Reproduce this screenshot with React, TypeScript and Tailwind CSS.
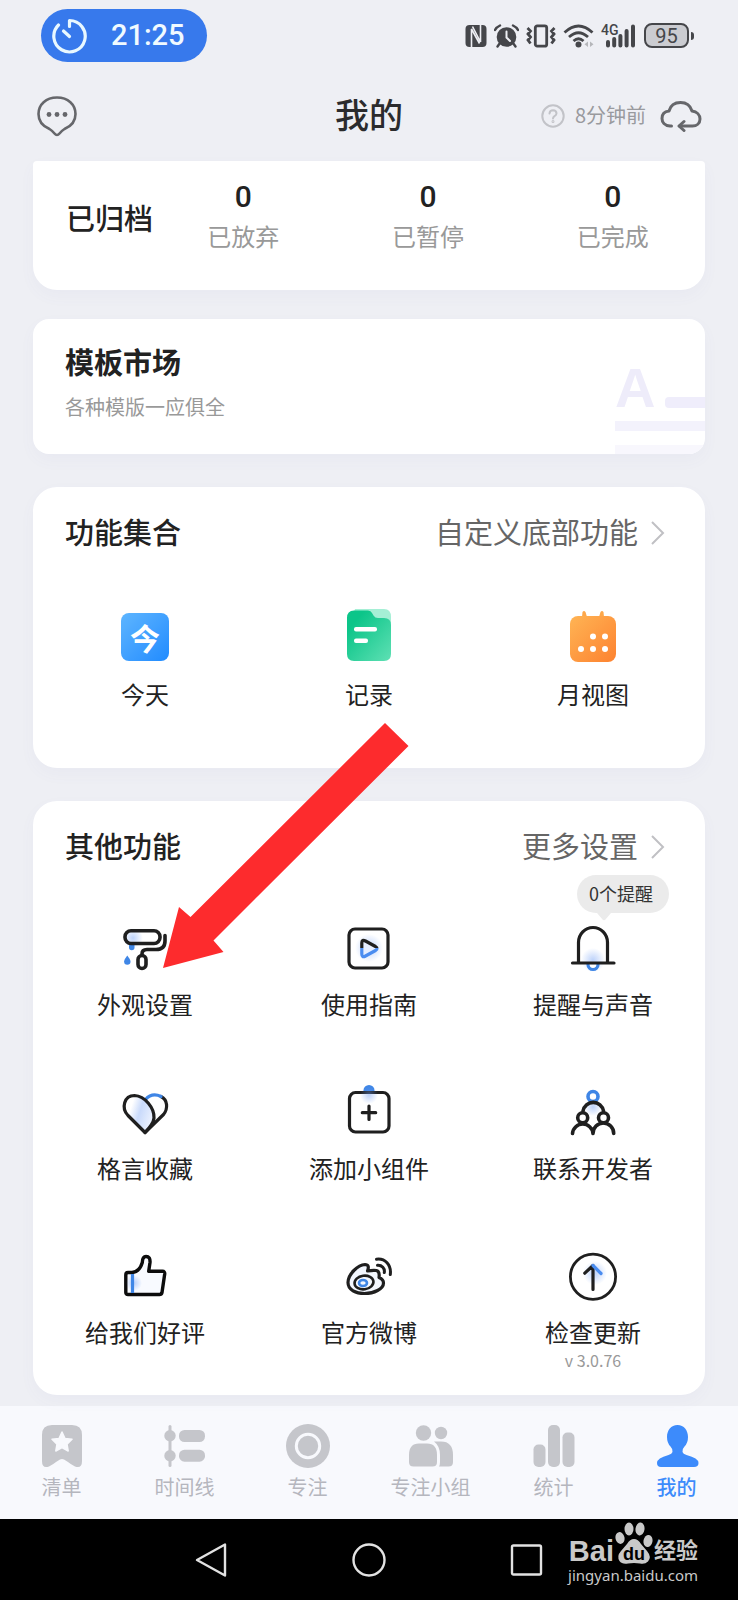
import React from 'react';

interface Feature {
  label: string;
  icon: React.ReactNode;
  note?: string;
  badge?: string;
}

const archived = [
  { label: '已放弃', count: 0 },
  { label: '已暂停', count: 0 },
  { label: '已完成', count: 0 },
];

const INK = '#1f1f1f';
const BLUE = '#3f86e6';

/* ---------- Status bar icons ---------- */

function StatusIcons() {
  return (
    <div className="flex items-center gap-[7px] text-[#45464a]">
      <svg width="22" height="24" viewBox="0 0 22 24" aria-label="NFC">
        <rect x="0.500" y="1" width="21" height="22" rx="4" fill="currentColor" />
        <path d="M6.500 23V5L14.500 19.500M15.500 1V18L7.500 2.500" stroke="#eeeff4" strokeWidth="1.600" fill="none" />
      </svg>
      <svg width="25" height="24" viewBox="0 0 25 24" aria-label="闹钟">
        <circle cx="12.500" cy="13" r="9.800" fill="currentColor" />
        <path d="M1 6Q2.500 3 6 1.500M24 6Q22.500 3 19 1.500M6 19L3.500 22.500M19 19L21.500 22.500" stroke="currentColor" strokeWidth="2.400" strokeLinecap="round" fill="none" />
        <path d="M12.500 7.500V13.500L16 17" stroke="#eeeff4" strokeWidth="2" fill="none" strokeLinecap="round" />
      </svg>
      <svg width="30" height="24" viewBox="0 0 30 24" aria-label="振动">
        <rect x="9.300" y="1.800" width="11.400" height="20.400" rx="2" fill="none" stroke="currentColor" strokeWidth="2.800" />
        <path d="M1.500 4L4.500 7L2 10L4.500 13L2 16L4.500 19.500M28.500 4L25.500 7L28 10L25.500 13L28 16L25.500 19.500" fill="none" stroke="currentColor" strokeWidth="2.800" />
      </svg>
      <svg width="31" height="24" viewBox="0 0 31 24" aria-label="无线网络">
        <path d="M1.500 8.500Q15.500 -4.500 29.500 8.500M6 13Q15.500 4.500 25 13M10.500 17Q15.500 12.500 20.500 17" fill="none" stroke="currentColor" strokeWidth="2.800" />
        <circle cx="15.500" cy="20.500" r="3" fill="currentColor" />
        <path d="M25 17.500V23L21.500 20.200ZM27 17.500V23L30.500 20.200Z" fill="#b5b6ba" />
      </svg>
      <div className="relative">
        <svg width="36" height="24" viewBox="0 0 36 24" aria-label="信号">
          <path d="M7 18V21.500M13.200 15V21.500M19.400 12V21.500M25.600 7V21.500M32 2.500V21.500" stroke="currentColor" strokeWidth="4" strokeLinecap="round" />
        </svg>
        <span className="absolute left-0 -top-[2px] font-[Roboto] text-sm leading-4 font-medium">4G</span>
      </div>
      <div className="flex items-center gap-[2px]">
        <div className="flex h-[25px] w-[45px] items-center justify-center rounded-lg border-2 border-current bg-[#cbccd1] font-[Roboto] text-xl leading-5">
          95
        </div>
        <div className="h-2 w-[3px] rounded-r-sm bg-current" />
      </div>
    </div>
  );
}

function TimerIcon() {
  return (
    <svg width="36" height="36" viewBox="0 0 36 36" fill="none" stroke="#e8f8ff" strokeWidth="3.200" strokeLinecap="round" strokeLinejoin="round">
      <path d="M18.500 8.500V2.500A15.700 15.700 0 1 1 7.500 7" />
      <path d="M12.500 13L18.500 18.500" />
    </svg>
  );
}

/* ---------- Colourful shortcuts ---------- */

function TodayIcon() {
  return (
    <div className="flex h-12 w-12 items-center justify-center rounded-lg bg-linear-to-br from-[#5db5ff] to-[#1f8bff] text-3xl leading-10 font-bold text-white">
      今
    </div>
  );
}

function RecordIcon() {
  return (
    <svg width="56" height="56" viewBox="0 0 56 56">
      <defs>
        <linearGradient id="record" x1="0" y1="0" x2="1" y2="1">
          <stop offset="0.2" stopColor="#0cc589" />
          <stop offset="1" stopColor="#5fe0b4" />
        </linearGradient>
      </defs>
      <path d="M14 0H43Q50 0 50 8V20H30L12 6Z" fill="#a5efd5" />
      <path d="M13 1.500H27Q30 1.500 31 4L32.500 6.500Q34 9 37 9H43Q50 9 50 16V45Q50 52 43 52H13Q6 52 6 45V9Q6 1.500 13 1.500Z" fill="url(#record)" />
      <rect x="13" y="18" width="23" height="4.500" rx="2" fill="#fff" />
      <rect x="13" y="29.500" width="14" height="4.500" rx="2" fill="#fff" />
    </svg>
  );
}

function MonthIcon() {
  return (
    <svg width="56" height="56" viewBox="0 0 56 56">
      <defs>
        <linearGradient id="month" x1="0" y1="0" x2="1" y2="1">
          <stop offset="0" stopColor="#ffb454" />
          <stop offset="1" stopColor="#fd8230" />
        </linearGradient>
      </defs>
      <path d="M17 8L17.500 3Q19 1 20.500 3L22 8ZM34 8L35.500 3Q37 1 38.500 3L39 8Z" fill="#fda84b" />
      <rect x="5" y="7" width="46" height="46" rx="8" fill="url(#month)" />
      <g fill="#fff">
        <circle cx="28" cy="27.500" r="3" />
        <circle cx="40" cy="27.500" r="3" />
        <circle cx="16" cy="40" r="3" />
        <circle cx="28" cy="40" r="3" />
        <circle cx="40" cy="40" r="3" />
      </g>
    </svg>
  );
}

/* ---------- Line icons, all on a 48px grid ---------- */

function LineIcon({ children, width = 3.2 }: { children: React.ReactNode; width?: number }) {
  return (
    <svg
      width="48"
      height="48"
      viewBox="0 0 48 48"
      fill="none"
      stroke={INK}
      strokeWidth={width}
      strokeLinecap="round"
      strokeLinejoin="round"
      className="overflow-visible"
    >
      {children}
    </svg>
  );
}

// Soft blue spot behind the strokes
function Glow({ id, cx, cy, r }: { id: string; cx: number; cy: number; r: number }) {
  return (
    <>
      <radialGradient id={id}>
        <stop offset="0" stopColor="#6d9cf5" stopOpacity="0.45" />
        <stop offset="1" stopColor="#6d9cf5" stopOpacity="0" />
      </radialGradient>
      <circle cx={cx} cy={cy} r={r} fill={`url(#${id})`} stroke="none" />
    </>
  );
}

const otherFeatures: Feature[] = [
  {
    label: '外观设置',
    icon: (
      <LineIcon width={3.6}>
        <Glow id="g-roller" cx={12} cy={13} r={10} />
        <path d="M8 20H13.500V22.500A2.700 2.700 0 0 1 8 22.500Z" fill={BLUE} stroke="none" />
        <rect x="4" y="5.800" width="35" height="12.700" rx="6" />
        <path d="M44 10.500V16Q44 24.500 35 24.500H26Q21 24.500 21 29" />
        <rect x="17" y="30.500" width="8" height="13" rx="4" />
        <path d="M6.300 30.500Q9.500 34.500 9.500 36.500A3.200 3.200 0 0 1 3.100 36.500Q3.100 34.500 6.300 30.500Z" fill={BLUE} stroke="none" />
      </LineIcon>
    ),
  },
  {
    label: '使用指南',
    icon: (
      <LineIcon>
        <defs>
          <linearGradient id="play" gradientUnits="userSpaceOnUse" x1="0" y1="14" x2="0" y2="33">
            <stop offset="0.480" stopColor={INK} />
            <stop offset="0.500" stopColor="#4b8df0" />
          </linearGradient>
        </defs>
        <Glow id="g-play" cx={24} cy={23} r={14} />
        <rect x="4" y="4" width="39" height="39" rx="6" />
        <path d="M16.800 18Q16.800 14 20.500 16L30.500 21.500Q33.500 23.300 30.500 25.500L20.500 31Q16.800 33 16.800 29Z" stroke="url(#play)" fill="#e6eeff" />
      </LineIcon>
    ),
  },
  {
    label: '提醒与声音',
    badge: '0个提醒',
    icon: (
      <LineIcon>
        <Glow id="g-bell" cx={24} cy={35} r={12} />
        <path d="M19 39.500A5 5 0 0 0 29 39.500" stroke={BLUE} fill="#fff" />
        <path d="M9.500 37V17.500A14.500 15 0 0 1 38.500 17.500V37" />
        <path d="M3.500 38H45" />
      </LineIcon>
    ),
  },
  {
    label: '格言收藏',
    icon: (
      <LineIcon>
        <defs>
          <linearGradient id="leaf" x1="0" y1="0.300" x2="1" y2="0.700">
            <stop offset="0.200" stopColor="#fff" />
            <stop offset="0.500" stopColor="#c9dafb" />
            <stop offset="1" stopColor="#f2f6ff" />
          </linearGradient>
        </defs>
        <path d="M40 7.500C47 11 47 20 42.500 25.500L24 43.500" />
        <path d="M24.500 10.500C29 5.500 35 5.200 40 7.500" stroke={BLUE} />
        <path d="M24 43.500L7 26.500C0 19 3 6.500 13.500 6.500C24 7 33.500 19 33 29Q32.500 35 24 43.500Z" fill="url(#leaf)" />
      </LineIcon>
    ),
  },
  {
    label: '添加小组件',
    icon: (
      <LineIcon>
        <circle cx="24" cy="1.500" r="5.500" fill={BLUE} stroke="none" />
        <rect x="4.500" y="3.500" width="39.500" height="39.500" rx="6" fill="#fff" />
        <Glow id="g-add" cx={24} cy={6} r={9} />
        <path d="M24 17V30.500M17.300 23.700H30.700" />
      </LineIcon>
    ),
  },
  {
    label: '联系开发者',
    icon: (
      <LineIcon width={3.6}>
        <Glow id="g-dev" cx={24} cy={18} r={9} />
        <circle cx="24" cy="7.500" r="5" stroke={BLUE} />
        <path d="M14 22A10.400 10.400 0 0 1 34.500 22" />
        <circle cx="13.700" cy="28.700" r="5" fill="#fff" />
        <circle cx="34.500" cy="28.700" r="5" fill="#fff" />
        <path d="M3.500 44.500A10.300 10.500 0 0 1 24 44.500A10.300 10.500 0 0 1 44.700 44.500" />
      </LineIcon>
    ),
  },
  {
    label: '给我们好评',
    icon: (
      <LineIcon>
        <path d="M4.800 22Q4.800 19.500 7 19.500H11Q18.500 19 21.300 9.500Q21.500 3.500 25 3.500Q29.500 3.500 29 9.500L27.700 18.300H41.500Q44 18.300 43.700 21L41 39.500Q40.500 41.500 38.500 41.500H7Q4.800 41.500 4.800 39.500Z" fill="#f8faff" stroke="#0c0c0c" strokeWidth="3.400" />
        <Glow id="g-thumb" cx={13} cy={30} r={8} />
        <path d="M11.500 21V40" stroke={BLUE} strokeLinecap="butt" />
      </LineIcon>
    ),
  },
  {
    label: '官方微博',
    icon: (
      <LineIcon>
        <path d="M22.500 18C24 14 23.500 11.500 20 11.500C13 12 3 21 3 29.500C3 37 11 40.500 19.500 40.500C29 40.500 38.500 36 38.500 30Q38.500 26.500 34 24.500Q35 18.500 31.500 17.500Q28 17 22.500 18Z" fill="#f3f7ff" />
        <ellipse cx="19" cy="29.500" rx="9.500" ry="6.800" strokeWidth="2.600" transform="rotate(-8 19 29.500)" />
        <ellipse cx="18" cy="30" rx="4" ry="3" stroke={BLUE} strokeWidth="2.600" />
        <path d="M31.500 6.200C40 5 46.500 12 45.300 21.500" strokeWidth="3" />
        <path d="M32.500 12.300C37 12 40 15.500 39.300 19.500" strokeWidth="3" />
      </LineIcon>
    ),
  },
  {
    label: '检查更新',
    note: 'v 3.0.76',
    icon: (
      <LineIcon width={2.8}>
        <Glow id="g-update" cx={26} cy={20} r={12} />
        <circle cx="24" cy="23.700" r="22.600" />
        <path d="M15.800 20.200L24 12.500V36.500" strokeWidth="3.200" />
        <path d="M32 20.500L24 12.500" stroke="#4b8df0" strokeWidth="3.200" />
      </LineIcon>
    ),
  },
];

const mainFeatures: Feature[] = [
  { label: '今天', icon: <TodayIcon /> },
  { label: '记录', icon: <RecordIcon /> },
  { label: '月视图', icon: <MonthIcon /> },
];

/* ---------- Bottom tabs ---------- */

const tabs = [
  {
    label: '清单',
    icon: (
      <>
        <path d="M14 1H34Q44 1 44 11V37Q44 45 37 42.500Q33 40.500 30 38L26 35.500Q24 34.500 22 35.500L18 38Q15 40.500 11 42.500Q4 45 4 37V11Q4 1 14 1Z" />
        <path d="M24 8L27 14.500L34 15.300L29 20.200L30.200 27L24 23.700L17.800 27L19 20.200L14 15.300L21 14.500Z" fill="#f8f9fd" stroke="#f8f9fd" strokeWidth="1.500" strokeLinejoin="round" />
      </>
    ),
  },
  {
    label: '时间线',
    icon: (
      <>
        <rect x="7.500" y="1" width="3" height="42" rx="1.500" />
        <circle cx="9" cy="11.700" r="5.700" />
        <circle cx="9" cy="31.700" r="5.700" />
        <rect x="18" y="6" width="26" height="12" rx="5.500" />
        <rect x="18" y="25.700" width="26" height="12" rx="5.500" />
      </>
    ),
  },
  {
    label: '专注',
    icon: (
      <>
        <circle cx="24" cy="22" r="22" />
        <circle cx="24" cy="22" r="11.700" stroke="#f8f9fd" strokeWidth="3" />
      </>
    ),
  },
  {
    label: '专注小组',
    icon: (
      <>
        <circle cx="16.500" cy="9" r="7.700" />
        <circle cx="34" cy="9" r="6.200" />
        <path d="M12 19.500H20Q30 19.500 30 31V38Q30 42.500 25.500 42.500H6.500Q2 42.500 2 38V31Q2 19.500 12 19.500Z" />
        <path d="M27 17.500H34Q46 17.500 46 31V38Q46 42.500 41.500 42.500H32Q33 41 33 38V31Q33 22 27 17.500Z" />
      </>
    ),
  },
  {
    label: '统计',
    icon: (
      <>
        <rect x="3.500" y="20.500" width="12" height="22.500" rx="5" />
        <rect x="18" y="1" width="12" height="42" rx="5" />
        <rect x="32.500" y="8.500" width="12" height="34.500" rx="5" />
      </>
    ),
  },
  {
    label: '我的',
    active: true,
    icon: (
      <path d="M24.500 1C31 1 35 6.500 35 13Q35 19 31.500 22.500Q29 25 29.500 28Q30 30 33.500 31Q45.500 34 45.500 39Q45.500 43 41 43H8Q4 43 4 39Q4 34 15.500 31Q19 30 19.500 28Q20 25 17.500 22.500Q14 19 14 13C14 6.500 18 1 24.500 1Z" />
    ),
  },
];

function Card({ className, children }: { className: string; children: React.ReactNode }) {
  return (
    <section className={`bg-white shadow-[0_6px_16px_rgba(90,90,180,0.04)] ${className}`}>{children}</section>
  );
}

function SectionTitle({ title, action }: { title: string; action: string }) {
  return (
    <div className="flex items-center justify-between pr-10 pl-8 text-[29px] leading-10">
      <h2 className="font-medium">{title}</h2>
      <button type="button" className="flex items-center gap-3 text-[#666]">
        {action}
        <svg className="mt-1" width="15" height="24" viewBox="0 0 15 24" fill="none" stroke="#c0c0c4" strokeWidth="2">
          <path d="M2 1L13 12L2 23" />
        </svg>
      </button>
    </div>
  );
}

function FeatureButton({ feature }: { feature: Feature }) {
  return (
    <button type="button" className="relative flex flex-col items-center justify-start">
      {feature.icon}
      <span className="mt-[15px] text-2xl leading-8">{feature.label}</span>
      {feature.note && <span className="text-base leading-6 text-[#999]">{feature.note}</span>}
      {feature.badge && (
        <span className="absolute -top-[50px] left-24 rounded-full bg-[#ebebeb] pr-4 pb-[2px] pl-3 text-lg leading-9 text-[#333]">
          {feature.badge}
          <svg className="absolute top-full left-5" width="14" height="8" viewBox="0 0 14 8" fill="#ebebeb">
            <path d="M0 0H14L8.500 6.500Q7 8 5.500 6.500Z" />
          </svg>
        </span>
      )}
    </button>
  );
}

export default function App() {
  return (
    <div className="bg-[#eeeff4] font-['Noto_Sans_CJK_SC',sans-serif] text-[#222]">
      {/* Status bar */}
      <div className="flex items-center justify-between py-[9px] pr-11 pl-[41px]">
        <div className="flex h-[53px] items-center gap-6 rounded-full bg-[#3779ec] pr-[22px] pl-[10px] font-[Roboto] text-[29px] leading-none font-medium text-[#f0faff]">
          <TimerIcon />
          21:25
        </div>
        <StatusIcons />
      </div>

      {/* Header */}
      <header className="grid h-[90px] grid-cols-[1fr_auto_1fr] items-center px-9">
        <button type="button" aria-label="消息" className="justify-self-start">
          <svg width="42" height="42" viewBox="0 0 42 42" fill="none" stroke="#66676b" strokeWidth="2.600" strokeLinejoin="round">
            <path d="M21 2.500C32 2.500 39.500 9.500 39.500 19C39.500 27 34.500 31.500 28.500 34Q26 35.500 23.500 38.500Q21 41.500 18.500 38.500Q16 35.500 13.500 34C7.500 31.500 2.500 27 2.500 19C2.500 9.500 10 2.500 21 2.500Z" />
            <g fill="#66676b" stroke="none">
              <circle cx="13" cy="19.500" r="2.400" />
              <circle cx="21" cy="19.500" r="2.400" />
              <circle cx="29" cy="19.500" r="2.400" />
            </g>
          </svg>
        </button>
        <h1 className="pb-1 text-[34px] leading-10 font-medium text-[#2b2b2d]">我的</h1>
        <div className="flex items-center justify-self-end text-xl leading-8 text-[#999a9e]">
          <button type="button" aria-label="帮助">
            <svg width="24" height="24" viewBox="0 0 24 24" fill="none" stroke="#c2c3c8" strokeWidth="2" strokeLinecap="round">
              <circle cx="12" cy="12" r="10.700" />
              <path d="M8.500 9.500Q8.800 6.300 12 6.300Q15.500 6.500 15.500 9.500Q15.300 11.200 13.500 12.200Q12 13.200 12 14.500" />
              <circle cx="12" cy="17.500" r="0.500" />
            </svg>
          </button>
          <span className="ml-[10px] pb-[2px]">8分钟前</span>
          <button type="button" aria-label="同步" className="ml-[14px]">
            <svg width="42" height="32" viewBox="0 0 42 32" fill="none" stroke="#66676b" strokeWidth="3" strokeLinecap="round" strokeLinejoin="round">
              <path d="M11.500 26H10C4.500 25.500 2 22 2 18.500C2 14.500 4.500 11.500 9 11C10.500 5.500 15 2.500 20.500 2.500C26.500 2.500 30.500 6 32 11C37 11.500 40 15 40 19C40 23.500 36.500 26 32.500 26H19.500" />
              <path d="M24 21.500L19 26L24 30.500" />
            </svg>
          </button>
        </div>
      </header>

      <main className="px-[33px] pb-[11px]">
        {/* Archived */}
        <Card className="flex rounded-t rounded-b-3xl">
          <h2 className="w-[118px] shrink-0 pt-9 pl-[33px] text-[29px] leading-10 font-medium whitespace-nowrap">
            已归档
          </h2>
          <dl className="grid flex-1 grid-cols-3 pt-5 pb-[38px]">
            {archived.map((item) => (
              <div key={item.label} className="flex flex-col-reverse items-center gap-[7px]">
                <dt className="text-2xl leading-8 text-[#999]">{item.label}</dt>
                <dd className="font-[Roboto] text-3xl leading-8 font-medium">{item.count}</dd>
              </div>
            ))}
          </dl>
        </Card>

        {/* Template market */}
        <Card className="relative mt-[29px] overflow-hidden rounded-2xl pt-[22px] pb-[31px] pl-8">
          <h2 className="text-[29px] leading-10 font-bold">模板市场</h2>
          <p className="mt-[10px] text-xl leading-8 text-[#999]">各种模版一应俱全</p>
          <div className="absolute right-0 bottom-0 w-[90px]" aria-hidden="true">
            <div className="flex items-end justify-between">
              <span className="font-['Liberation_Sans',sans-serif] text-[56px] leading-[44px] font-bold text-[#eeecfa]">A</span>
              <span className="mb-[2px] h-[11px] w-10 rounded-l-sm bg-[#efedfb]" />
            </div>
            <div className="mt-[11px] h-[10px] bg-[#f3f2fc]" />
            <div className="mt-[14px] h-[9px] bg-[#f8f7fd]" />
          </div>
        </Card>

        {/* Main features */}
        <Card className="mt-[33px] rounded-3xl pt-6 pb-[58px]">
          <SectionTitle title="功能集合" action="自定义底部功能" />
          <div className="mt-[58px] grid grid-cols-3">
            {mainFeatures.map((feature) => (
              <button key={feature.label} type="button" className="flex flex-col items-center">
                <span className="flex h-14 items-center">{feature.icon}</span>
                <span className="mt-[13px] text-2xl leading-8">{feature.label}</span>
              </button>
            ))}
          </div>
        </Card>

        {/* Other features */}
        <Card className="relative mt-[33px] rounded-3xl pt-6 pb-[23px]">
          <SectionTitle title="其他功能" action="更多设置" />
          <div className="mt-[60px] grid grid-cols-3 gap-y-[69px]">
            {otherFeatures.map((feature) => (
              <FeatureButton key={feature.label} feature={feature} />
            ))}
          </div>

          {/* Pointer to the appearance settings */}
          <svg
            className="pointer-events-none absolute -top-[78px] left-[130px]"
            width="246"
            height="246"
            viewBox="0 0 246 246"
            fill="#fd2b2d"
            aria-hidden="true"
          >
            <path d="M0 245L16 184L27.500 194L222 0L245.500 23L50.500 217.500L60.500 229Z" />
          </svg>
        </Card>
      </main>

      {/* Tabs */}
      <nav className="grid grid-cols-6 bg-[#f8f9fd] pt-[18px] pb-5">
        {tabs.map((tab) => (
          <a
            key={tab.label}
            href="#"
            className={`flex flex-col items-center gap-[7px] text-xl leading-6 ${
              tab.active ? 'font-medium text-[#3d8bfb]' : 'text-[#b5b6be]'
            }`}
          >
            <svg width="48" height="44" viewBox="0 0 48 44" fill={tab.active ? '#3d8bfb' : '#c5c6cb'}>
              {tab.icon}
            </svg>
            {tab.label}
          </a>
        ))}
      </nav>

      {/* System navigation */}
      <div className="relative flex h-[81px] items-center justify-center gap-[124px] bg-black">
        <button type="button" aria-label="返回">
          <svg width="34" height="36" viewBox="0 0 34 36" fill="none" stroke="#e2e2e2" strokeWidth="2.400" strokeLinejoin="round">
            <path d="M31 2.500V33.500L3 18Z" />
          </svg>
        </button>
        <button type="button" aria-label="主屏幕">
          <svg width="34" height="36" viewBox="0 0 34 36" fill="none" stroke="#e2e2e2" strokeWidth="2.400">
            <circle cx="17" cy="18" r="15.500" />
          </svg>
        </button>
        <button type="button" aria-label="最近任务">
          <svg width="34" height="36" viewBox="0 0 34 36" fill="none" stroke="#e2e2e2" strokeWidth="2.400">
            <rect x="2" y="3.500" width="29" height="29" rx="1.500" />
          </svg>
        </button>

        {/* Watermark */}
        <div className="absolute top-0 right-10 flex flex-col items-end text-[#c9c9c9]">
          <div className="flex h-[46px] items-end font-['Liberation_Sans','Noto_Sans_CJK_SC',sans-serif] font-bold">
            <span className="text-[29px] leading-7">Bai</span>
            <svg className="mx-px" width="38" height="44" viewBox="0 0 38 44" fill="#c9c9c9">
              <ellipse cx="5" cy="17" rx="4.500" ry="6" transform="rotate(-12 5 17)" />
              <ellipse cx="14" cy="8" rx="4.500" ry="6.500" />
              <ellipse cx="25" cy="8" rx="4.500" ry="6.500" transform="rotate(8 25 8)" />
              <ellipse cx="33" cy="20" rx="4.500" ry="6" transform="rotate(10 33 20)" />
              <path d="M19 18Q23 18 26 23L32 30Q37 36 33 40.500Q30 43.500 25 42.500Q19 41.500 13 42.500Q7 43.500 4.500 40Q1.500 35 6 30L12 23Q15 18 19 18Z" />
              <text x="19" y="39" textAnchor="middle" fontSize="18" fill="#000">du</text>
            </svg>
            <span className="text-[22px] leading-7">经验</span>
          </div>
          <span className="font-['Noto_Sans',sans-serif] text-[15px] leading-5">jingyan.baidu.com</span>
        </div>
      </div>
    </div>
  );
}
